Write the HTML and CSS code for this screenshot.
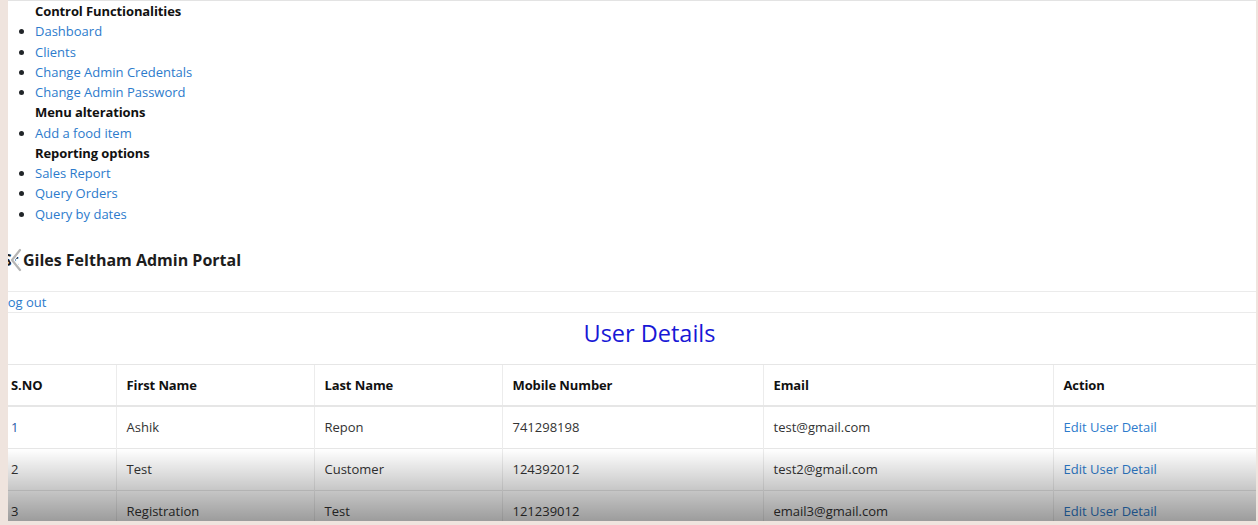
FILE: index.html
```html
<!DOCTYPE html>
<html lang="en">
<head>
<meta charset="utf-8">
<title>St Giles Feltham Admin Portal</title>
<link rel="stylesheet" href="styles.css">
</head>
<body>
<div class="frame">
  <div class="page">
    <ul class="menu">
      <li class="menu-head">Control Functionalities</li>
      <li class="menu-item"><a href="#">Dashboard</a></li>
      <li class="menu-item"><a href="#">Clients</a></li>
      <li class="menu-item"><a href="#">Change Admin Credentals</a></li>
      <li class="menu-item"><a href="#">Change Admin Password</a></li>
      <li class="menu-head">Menu alterations</li>
      <li class="menu-item"><a href="#">Add a food item</a></li>
      <li class="menu-head">Reporting options</li>
      <li class="menu-item"><a href="#">Sales Report</a></li>
      <li class="menu-item"><a href="#">Query Orders</a></li>
      <li class="menu-item"><a href="#">Query by dates</a></li>
    </ul>
    <h5 class="brand">St Giles Feltham Admin Portal</h5>
    <div class="navbar"><a href="#">Log out</a></div>
    <h2 class="title">User Details</h2>
    <table class="users">
      <colgroup>
        <col class="c1"><col class="c2"><col class="c3"><col class="c4"><col class="c5"><col class="c6">
      </colgroup>
      <thead>
        <tr><th>S.NO</th><th>First Name</th><th>Last Name</th><th>Mobile Number</th><th>Email</th><th>Action</th></tr>
      </thead>
      <tbody>
        <tr><td class="sno">1</td><td>Ashik</td><td>Repon</td><td>741298198</td><td>test@gmail.com</td><td><a href="#">Edit User Detail</a></td></tr>
        <tr><td>2</td><td>Test</td><td>Customer</td><td>124392012</td><td>test2@gmail.com</td><td><a href="#">Edit User Detail</a></td></tr>
        <tr><td>3</td><td>Registration</td><td>Test</td><td>121239012</td><td>email3@gmail.com</td><td><a href="#">Edit User Detail</a></td></tr>
      </tbody>
    </table>
  </div>
  <div class="shade"></div>
  <svg class="chevron" width="16" height="26" viewBox="0 0 16 26"><polyline points="12,3 4,13 12,23" fill="none" stroke="#ffffff" stroke-width="4.5" stroke-linecap="round" stroke-linejoin="round"/><polyline points="12,3 4,13 12,23" fill="none" stroke="#b5b5b5" stroke-width="2.2" stroke-linecap="round" stroke-linejoin="round"/></svg>
</div>
</body>
</html>
```

FILE: styles.css
```css
html, body {
  margin: 0;
  padding: 0;
}
body {
  background: #efe4de;
  width: 1258px;
  height: 525px;
  overflow: hidden;
  font-family: "Open Sans", "Noto Sans", sans-serif;
  font-size: 13px;
  line-height: 20.25px;
  color: #212529;
}
.frame {
  position: relative;
  margin-left: 8px;
  width: 1248px;
  height: 520px;
  border-top: 1px solid #e3e3e3;
  background: #ffffff;
  overflow: hidden;
}
.page {
  margin-left: -7px;
}
a {
  color: #2d7bcc;
  text-decoration: none;
}
.menu {
  margin: 0;
  padding-left: 34px;
}
.menu-head {
  list-style: none;
  font-weight: 700;
  color: #111;
  letter-spacing: -0.1px;
}
.menu-item {
  list-style: disc;
}
.brand {
  margin: 26px 0 0 2px;
  font-size: 16px;
  line-height: 21px;
  font-weight: 700;
  color: #1d1d1d;
}
.navbar {
  margin-top: 20px;
  border-top: 1px solid #ebebeb;
  border-bottom: 1px solid #ebebeb;
  height: 20px;
  line-height: 21px;
}
.title {
  margin: 0;
  height: 51px;
  line-height: 40px;
  text-align: center;
  font-size: 23.5px;
  font-weight: 400;
  color: #1818d6;
  padding-left: 42px;
}
.users {
  border-collapse: collapse;
  table-layout: fixed;
  width: 1280px;
}
.c1 { width: 115px; }
.c2 { width: 198px; }
.c3 { width: 188px; }
.c4 { width: 261px; }
.c5 { width: 290px; }
.c6 { width: 228px; }
.users th, .users td {
  height: 41px;
  padding: 0 10px;
  text-align: left;
  vertical-align: middle;
  border-top: 1px solid #e6e6e6;
  border-left: 1px solid #ececec;
  white-space: nowrap;
}
.users th {
  font-weight: 700;
  color: #111;
  letter-spacing: -0.1px;
}
.users td {
  color: #333;
}
.users th:first-child, .users td:first-child {
  border-left: none;
}
.users thead th {
  border-bottom: 2px solid #e6e6e6;
  height: 40px;
}
.users td.sno {
  color: #2a5da8;
}
.shade {
  position: absolute;
  left: 0;
  right: 0;
  bottom: 0;
  height: 72px;
  background: linear-gradient(to bottom, rgba(0,0,0,0), rgba(0,0,0,0.39));
  pointer-events: none;
}
.chevron {
  position: absolute;
  left: 0;
  top: 246px;
}
```
